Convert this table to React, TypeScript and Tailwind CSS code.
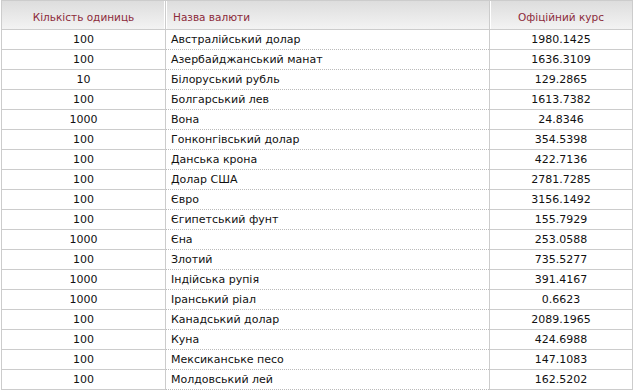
import React from 'react';

const rows: [string, string, string][] = [
	['100', 'Австралійський долар', '1980.1425'],
	['100', 'Азербайджанський манат', '1636.3109'],
	['10', 'Білоруський рубль', '129.2865'],
	['100', 'Болгарський лев', '1613.7382'],
	['1000', 'Вона', '24.8346'],
	['100', 'Гонконгівський долар', '354.5398'],
	['100', 'Данська крона', '422.7136'],
	['100', 'Долар США', '2781.7285'],
	['100', 'Євро', '3156.1492'],
	['100', 'Єгипетський фунт', '155.7929'],
	['1000', 'Єна', '253.0588'],
	['100', 'Злотий', '735.5277'],
	['1000', 'Індійська рупія', '391.4167'],
	['1000', 'Іранський ріал', '0.6623'],
	['100', 'Канадський долар', '2089.1965'],
	['100', 'Куна', '424.6988'],
	['100', 'Мексиканське песо', '147.1083'],
	['100', 'Молдовський лей', '162.5202'],
];

function App() {
	return (
		<div className="bg-white pl-px font-['DejaVu_Sans',Verdana,sans-serif]">
			<table className="w-[631px] table-fixed border-collapse">
				<colgroup>
					<col className="w-[164px]" />
					<col className="w-[324px]" />
					<col className="w-[143px]" />
				</colgroup>
				<thead>
					<tr className="h-[29px] bg-gradient-to-b from-[#dddddd] to-[#f4f4f4] text-[10.5px] text-[#8c2a3a]">
						<th className="border border-[#cccccc] pt-[5px] text-center font-normal shadow-[inset_-1px_0_0_#ffffff]">Кількість одиниць</th>
						<th className="border border-[#cccccc] pt-[5px] pl-[7px] text-left font-normal shadow-[inset_1px_0_0_#ffffff]">Назва валюти</th>
						<th className="border border-[#cccccc] pt-[5px] text-center font-normal shadow-[inset_1px_0_0_#ffffff]">Офіційний курс</th>
					</tr>
				</thead>
				<tbody className="text-[11px] text-[#111111]">
					{rows.map(([units, name, rate]) => (
						<tr key={name} className="h-[20px]">
							<td className="border border-[#cccccc] p-0 text-center leading-[19px]">{units}</td>
							<td className="border-x border-b border-dotted border-x-[#cccccc] border-b-[#bbbbbb] p-0 pl-[5px] leading-[19px] [border-left-style:solid] [border-right-style:solid]">{name}</td>
							<td className="border border-[#cccccc] p-0 text-center leading-[19px]">{rate}</td>
						</tr>
					))}
				</tbody>
			</table>
		</div>
	);
}

export default App;
